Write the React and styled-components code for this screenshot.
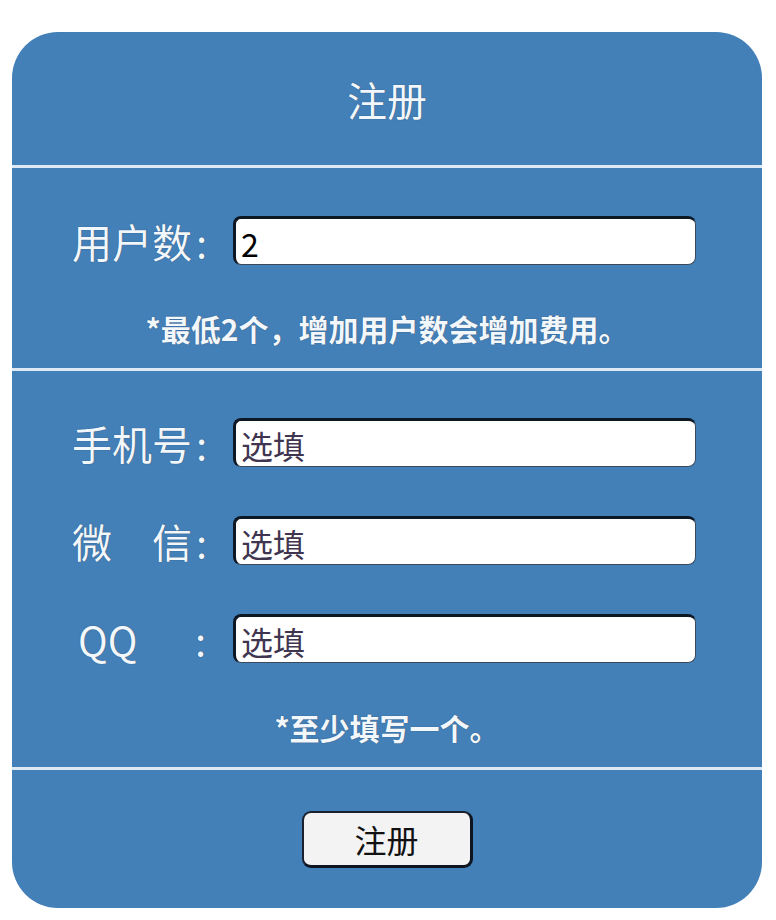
import React from 'react';
import styled, { createGlobalStyle } from 'styled-components';

const GlobalStyle = createGlobalStyle`
  body {
    margin: 0;
    background: #ffffff;
    font-family: "Noto Sans CJK SC", "Noto Sans", sans-serif;
  }
`;

const Card = styled.form`
  width: 750px;
  margin: 32px 0 0 12px;
  background: #4480b8;
  border-radius: 46px;
  overflow: hidden;
  display: flex;
  flex-direction: column;
  color: #f2f7fc;
`;

const Header = styled.div`
  height: 133px;
  display: flex;
  align-items: center;
  justify-content: center;
  font-size: 40px;
  text-shadow: 0 0 1px rgba(20, 40, 70, 0.8);
`;

const Divider = styled.div`
  height: 3px;
  background: #dde9f5;
`;

const Section = styled.div`
  display: flex;
  flex-direction: column;
  padding: ${({ pad }) => pad};
  gap: ${({ gap }) => gap || '0'};
`;

const Row = styled.div`
  display: flex;
  align-items: center;
  height: 49px;
  padding-left: 60px;
`;

const Label = styled.label`
  width: 161px;
  display: flex;
  align-items: center;
  font-size: 40px;
  line-height: 1;
  text-shadow: 0 0 1px rgba(20, 40, 70, 0.8);
`;

const LabelName = styled.span`
  width: ${({ width }) => width || 'auto'};
  display: inline-block;
  padding-left: ${({ indent }) => indent || '0'};
`;

const Colon = styled.span`
  margin-left: 4px;
`;

const Input = styled.input`
  box-sizing: border-box;
  width: 463px;
  height: 49px;
  border-radius: 8px;
  border-top: 3px solid #0e1824;
  border-left: 3px solid #0e1824;
  border-right: 1px solid #3a4a5c;
  border-bottom: 1px solid #3a4a5c;
  background: #ffffff;
  padding: 2px 5px 0;
  font-family: "Noto Sans CJK SC", "Noto Sans", sans-serif;
  font-size: 32px;
  color: #000000;
  outline: none;

  &::placeholder {
    color: #3f3550;
    opacity: 1;
  }
`;

const Note = styled.p`
  margin: 0;
  text-align: center;
  font-size: 30px;
  font-weight: bold;
  line-height: 1;
  text-shadow: 0 0 1px rgba(20, 40, 70, 0.8);
`;

const Footer = styled.div`
  height: 138px;
  display: flex;
  justify-content: center;
  padding-top: 41px;
  box-sizing: border-box;
`;

const Button = styled.button`
  width: 171px;
  height: 57px;
  box-sizing: border-box;
  background: #f3f3f3;
  border-radius: 9px;
  border-top: 2px solid #1a2230;
  border-left: 2px solid #1a2230;
  border-right: 3px solid #0e1420;
  border-bottom: 3px solid #0e1420;
  font-family: "Noto Sans CJK SC", "Noto Sans", sans-serif;
  font-size: 32px;
  color: #111111;
  cursor: pointer;
`;

const contacts = [
  { key: 'phone', name: '手机号' },
  { key: 'wechat', name: '微　信' },
  { key: 'qq', name: 'QQ', width: '113px', indent: '6px' },
];

export default function App() {
  return (
    <>
      <GlobalStyle />
      <Card onSubmit={(e) => e.preventDefault()}>
        <Header>注册</Header>
        <Divider />
        <Section pad="48px 0 25px" gap="48px">
          <Row>
            <Label>
              <LabelName>用户数</LabelName>
              <Colon>:</Colon>
            </Label>
            <Input defaultValue="2" />
          </Row>
          <Note>*最低2个，增加用户数会增加费用。</Note>
        </Section>
        <Divider />
        <Section pad="47px 0 25px" gap="49px">
          {contacts.map((c) => (
            <Row key={c.key}>
              <Label>
                <LabelName width={c.width} indent={c.indent}>
                  {c.name}
                </LabelName>
                <Colon>:</Colon>
              </Label>
              <Input placeholder="选填" />
            </Row>
          ))}
          <Note>*至少填写一个。</Note>
        </Section>
        <Divider />
        <Footer>
          <Button type="submit">注册</Button>
        </Footer>
      </Card>
    </>
  );
}
